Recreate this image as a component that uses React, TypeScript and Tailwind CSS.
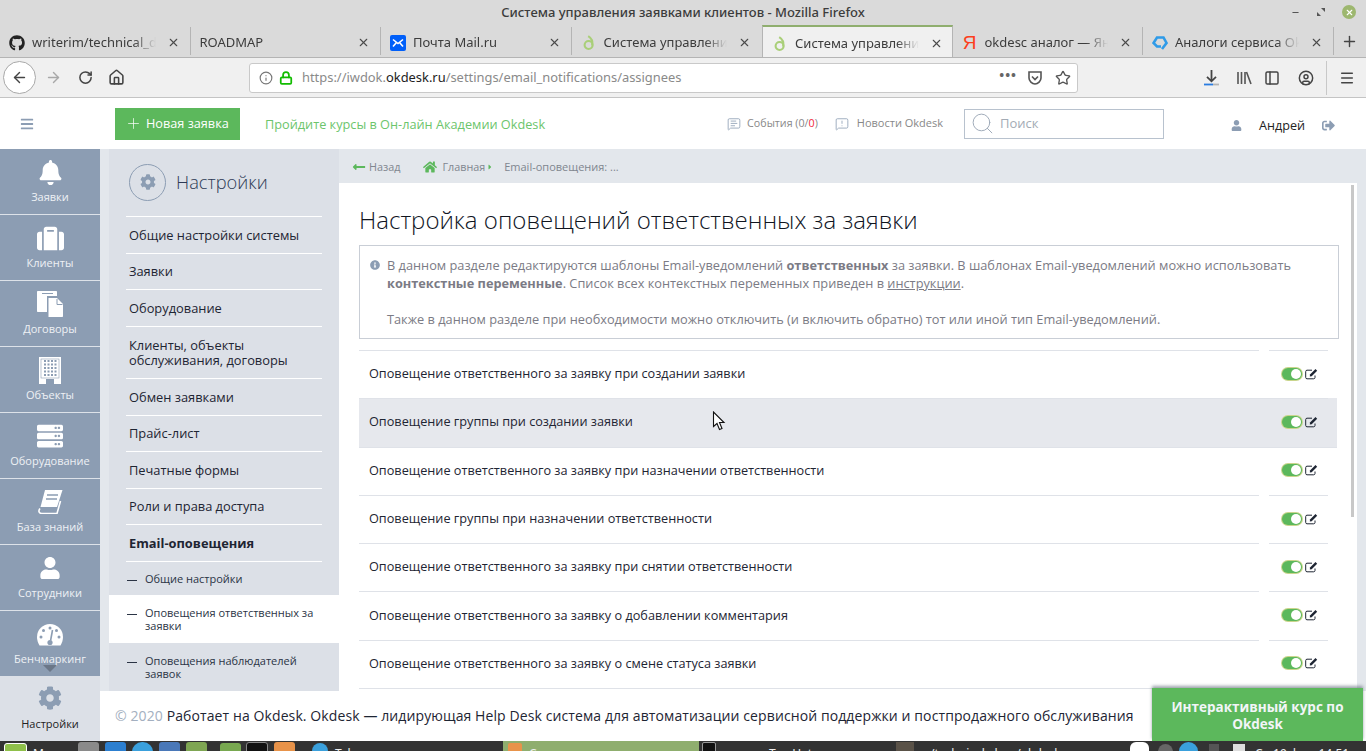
import {
  ArrowLeft,
  ArrowRight,
  RotateCw,
  Home,
  Info,
  Lock,
  Star,
  PanelLeft,
  CircleUser,
  Menu,
  X,
  Plus,
  Minus,
  MessageSquareText,
  MessageSquareWarning,
  Search,
} from "lucide-react";
import {
  FaBell,
  FaSuitcase,
  FaServer,
  FaUser,
  FaCog,
  FaHome,
  FaSignOutAlt,
  FaInfoCircle,
  FaGithub,
  FaLongArrowAltLeft,
  FaCaretRight,
  FaBars,
} from "react-icons/fa";

const chrome = "font-['Noto_Sans',sans-serif]";
const railBg = "#8c9db3";

function OkdeskLogo({ size = 16 }: { size?: number }) {
  return (
    <svg width={size} height={size} viewBox="0 0 16 20" fill="none" stroke="#a9cf78" strokeWidth="2.6">
      <circle cx="7.5" cy="12.5" r="5" />
      <path d="M12 13 C13 8 11 4 7 1.5" />
    </svg>
  );
}

function MailLogo() {
  return (
    <svg width="16" height="16" viewBox="0 0 16 16">
      <rect width="16" height="16" rx="2" fill="#005ff9" />
      <path d="M3 4.5 L8 8.5 L13 4.5 M3 11.5 L6.5 7.5 M13 11.5 L9.5 7.5" stroke="#fff" strokeWidth="1.6" fill="none" />
    </svg>
  );
}

function AnalogLogo() {
  return (
    <svg width="16" height="16" viewBox="0 0 16 16" fill="none" stroke="#2f9be8" strokeWidth="2.6">
      <path d="M10 14 L14.5 8 L11.5 2.5 H5 L1.5 8 L5 11.5 H9" />
    </svg>
  );
}

function YandexLogo() {
  return <span className="w-4 text-center text-[19px] leading-none font-['Liberation_Sans',sans-serif] text-[#fc3f1d]">Я</span>;
}

// rail icons that the packages don't have in the old solid look
function ContractsIcon() {
  return (
    <svg width="26" height="26" viewBox="0 0 26 26" fill="#fff">
      <path d="M1 0H19C19.6 0 20 .4 20 1V5H10V21H1C.4 21 0 20.6 0 20V1C0 .4 .4 0 1 0Z" />
      <path d="M11.5 7H20L26 13V25C26 25.6 25.6 26 25 26H11.5Z" />
      <path d="M5 2.5H16" stroke={railBg} strokeWidth="1" />
      <path d="M20 8V13.5H25.5" fill="none" stroke={railBg} strokeWidth="1" />
    </svg>
  );
}

function BuildingIcon() {
  const cols = [5, 8.5, 12, 15.5];
  const rows = [3, 6.5, 10, 13.5, 17];
  return (
    <svg width="22" height="27" viewBox="0 0 22 27">
      <rect width="22" height="27" fill="#fff" />
      {rows.map((y) =>
        cols.map((x) => <rect key={`${x}-${y}`} x={x} y={y} width="2" height="2" fill={railBg} />),
      )}
      <rect x="2" y="2" width="18" height="19" fill="none" stroke={railBg} strokeWidth="0.6" />
      <rect x="7" y="22" width="8" height="5" fill={railBg} />
    </svg>
  );
}

function BookIcon() {
  return (
    <svg width="25" height="24" viewBox="0 0 25 24" fill="#fff">
      <path d="M7 0H24.5L19 17H2.5Z" />
      <path d="M2 18.5C0 21 1 23.5 4 23.5H19L22.5 11" fill="none" stroke="#fff" strokeWidth="1.6" />
      <path d="M9 5H20M8 9H19" stroke={railBg} strokeWidth="1.4" />
    </svg>
  );
}

function DialIcon() {
  return (
    <svg width="26" height="22" viewBox="0 0 26 22" fill="#fff">
      <path d="M13 0A13 13 0 0 1 26 13C26 16 25 19 23.5 21.5H2.5C1 19 0 16 0 13A13 13 0 0 1 13 0Z" />
      <circle cx="13" cy="4" r="1.5" fill={railBg} />
      <circle cx="6.5" cy="6.5" r="1.5" fill={railBg} />
      <circle cx="19.5" cy="6.5" r="1.5" fill={railBg} />
      <circle cx="4" cy="13" r="1.5" fill={railBg} />
      <circle cx="22" cy="13" r="1.5" fill={railBg} />
      <path d="M15.5 6L13.6 16.5" stroke={railBg} strokeWidth="1.6" />
      <circle cx="13" cy="18.5" r="2.6" fill={railBg} />
    </svg>
  );
}

function EditIcon() {
  return (
    <svg className="ml-[3px]" width="13" height="12" viewBox="0 0 13 12" fill="none">
      <path d="M10 7.5V9.5C10 10.3 9.5 10.8 8.7 10.8H2C1.2 10.8.7 10.3.7 9.5V3.5C.7 2.7 1.2 2.2 2 2.2H7" stroke="#1e2533" strokeWidth="1" />
      <path d="M5 6.5L10.5 1L12.2 2.7L6.7 8.2L4.8 8.5Z" fill="#1e2533" />
    </svg>
  );
}

function BrowserTab({
  icon,
  title,
  active,
  last,
}: {
  icon?: React.ReactNode;
  title: string;
  active?: boolean;
  last?: boolean;
}) {
  return (
    <div
      className={`flex h-[32px] w-[190.5px] shrink-0 items-center pl-[9px] ${
        active ? "border-x border-[#b4b4b4] border-t-[2px] border-t-[#8fae6e] bg-[#f0f0f0] pr-[9px]" : ""
      }`}
    >
      <div className={`flex h-[28px] min-w-0 flex-1 items-center pt-[3px] ${icon ? "gap-[7px]" : ""}`}>
        {icon && <span className="flex w-4 shrink-0 justify-center">{icon}</span>}
        <span className="flex-1 overflow-hidden whitespace-nowrap text-[13px] text-[#3c3c3c] [mask-image:linear-gradient(to_right,black_82%,transparent)]">
          {title}
        </span>
        <X size={13} strokeWidth={2} className="ml-1 shrink-0 text-[#4a4a4a]" />
      </div>
      {!active && !last && <div className="ml-[10px] h-[28px] w-px shrink-0 bg-[#b4b4b4]" />}
      {last && <div className="ml-[10px] w-px shrink-0" />}
    </div>
  );
}

function BrowserChrome() {
  return (
    <div className={chrome}>
      <div className="relative flex h-[25px] items-center justify-center bg-[#dadada] pt-[1px] text-[13px] font-medium text-[#3c3c3c]">
        Система управления заявками клиентов - Mozilla Firefox
        <div className="absolute right-[10px] top-[5px] flex items-center gap-[17px]">
          <Minus size={9} strokeWidth={3} className="text-[#555]" />
          <svg width="8" height="8" viewBox="0 0 8 8" fill="#555">
            <path d="M4 0H8V4ZM0 4V8H4Z" />
          </svg>
          <span className="flex h-[14px] w-[14px] items-center justify-center rounded-full bg-[#9db76f]">
            <X size={9} strokeWidth={3} className="text-white" />
          </span>
        </div>
      </div>
      <div className="flex h-[32px] items-end bg-[#dadada]">
        <BrowserTab icon={<FaGithub size={16} className="text-[#222]" />} title="writerim/technical_docs" />
        <BrowserTab title="ROADMAP" />
        <BrowserTab icon={<MailLogo />} title="Почта Mail.ru" />
        <BrowserTab icon={<OkdeskLogo />} title="Система управления заявками" last />
        <BrowserTab icon={<OkdeskLogo />} title="Система управления заявками" active />
        <BrowserTab icon={<YandexLogo />} title="okdesc аналог — Яндекс" />
        <BrowserTab icon={<AnalogLogo />} title="Аналоги сервиса Okdesk" />
        <Plus size={17} strokeWidth={2} className="mb-[7px] ml-[7px] text-[#444]" />
      </div>
      <div className="flex h-[41px] items-center border-t border-[#b4b4b4] border-b border-b-[#c4c4c4] bg-[#f0f0f0] pl-[3px]">
        <span className="flex h-[33px] w-[33px] items-center justify-center rounded-full border border-[#a8a8a8] bg-white">
          <ArrowLeft size={17} strokeWidth={2} className="text-[#444]" />
        </span>
        <ArrowRight size={17} strokeWidth={2} className="ml-[9px] text-[#a8a8a8]" />
        <RotateCw size={15} strokeWidth={2.4} className="ml-[16px] text-[#444]" />
        <Home size={17} strokeWidth={2.2} className="ml-[15px] text-[#444]" />
        <div className="ml-[124px] flex h-[30px] w-[829px] items-center rounded-[3px] border border-[#c9c9c9] bg-white pl-[9px] pr-[6px] text-[12.9px] text-[#8a8a8a]">
          <Info size={14} className="text-[#777]" />
          <Lock size={14} strokeWidth={3} className="ml-[6px] text-[#12bc00]" />
          <span className="ml-[9px] flex-1 pt-[1px]">
            https://iwdok.<span className="text-[#222]">okdesk.ru</span>/settings/email_notifications/assignees
          </span>
          <span className="mb-[3px] text-[13px] font-bold tracking-[1px] text-[#666]">•••</span>
          <svg className="ml-[10px]" width="16" height="16" viewBox="0 0 16 16" fill="none" stroke="#555" strokeWidth="1.6">
            <path d="M2 2H14V8C14 11 11 14 8 14C5 14 2 11 2 8Z" />
            <path d="M5 6.5L8 9.5L11 6.5" />
          </svg>
          <Star size={16} strokeWidth={2} className="ml-[12px] text-[#555]" />
        </div>
        <svg className="ml-[126px]" width="15" height="17" viewBox="0 0 15 17" fill="none" stroke="#444" strokeWidth="1.8">
          <path d="M7.5 1V12M3 7.8L7.5 12.3L12 7.8" />
          <path d="M0 15.5H9" stroke="#2a7ce0" />
          <path d="M9 15.5H15" stroke="#b4b4b4" />
        </svg>
        <svg className="ml-[17px]" width="16" height="16" viewBox="0 0 16 16" fill="none" stroke="#555" strokeWidth="1.6">
          <path d="M2 2V14M5.5 2V14M9 2V14M10.5 2L15 14" />
        </svg>
        <PanelLeft size={16} strokeWidth={2.2} className="ml-[12px] text-[#444]" />
        <CircleUser size={16} strokeWidth={2.2} className="ml-[18px] text-[#444]" />
        <div className="ml-[12px] h-[34px] w-px bg-[#c8c8c8]" />
        <Menu size={16} strokeWidth={2.2} className="ml-[12px] text-[#444]" />
      </div>
    </div>
  );
}

function AppHeader() {
  return (
    <div className="flex h-[51px] items-center bg-white pl-[20px] text-[#888]">
      <FaBars size={14} className="text-[#8c9db3]" />
      <div className="ml-[81px] flex h-[32px] w-[125px] items-center bg-[#5cb85c] pl-[10px] text-[12.7px] text-white">
        <Plus size={17} strokeWidth={1} className="mr-[4px]" />
        Новая заявка
      </div>
      <a className="ml-[25px] pt-[2px] text-[12.73px] text-[#6cc56c]">Пройдите курсы в Он-лайн Академии Okdesk</a>
      <MessageSquareText size={14} strokeWidth={1.4} className="ml-[182px] text-[#8c9db3]" />
      <span className="ml-[6px] text-[10.7px]">
        События (0/<span className="text-[#f0263c]">0</span>)
      </span>
      <MessageSquareWarning size={14} strokeWidth={1.4} className="ml-[17px] text-[#8c9db3]" />
      <span className="ml-[8px] text-[11px]">Новости Okdesk</span>
      <div className="ml-[21px] flex h-[30px] w-[200px] items-center border border-[#b8c2ce] pl-[5px] text-[13px] text-[#a3abb5]">
        <Search size={25} strokeWidth={0.9} className="text-[#9aa6b5]" />
        <span className="ml-[5px] pt-[1px]">Поиск</span>
      </div>
      <FaUser size={11} className="ml-[67px] mt-[3px] text-[#8c9db3]" />
      <span className="ml-[17px] pt-[5px] text-[12.6px] text-[#222]">Андрей</span>
      <FaSignOutAlt size={13} className="ml-[17px] mt-[3px] text-[#8c9db3]" />
    </div>
  );
}

const railItems = [
  { label: "Заявки", icon: <FaBell size={25} /> },
  { label: "Клиенты", icon: <FaSuitcase size={27} /> },
  { label: "Договоры", icon: <ContractsIcon /> },
  { label: "Объекты", icon: <BuildingIcon /> },
  { label: "Оборудование", icon: <FaServer size={26} /> },
  { label: "База знаний", icon: <BookIcon /> },
  { label: "Сотрудники", icon: <FaUser size={22} /> },
];

function Rail() {
  return (
    <div className="flex w-[100px] shrink-0 flex-col bg-[#8c9db3] text-[11px] text-[#eef1f5]">
      {railItems.map((item) => (
        <div key={item.label} className="flex h-[66px] shrink-0 flex-col items-center border-b border-[#dde2e9] pt-[9px]">
          <span className="flex h-[28px] items-center justify-center text-white">{item.icon}</span>
          <span className="mt-[3px]">{item.label}</span>
        </div>
      ))}
      <div className="relative flex h-[65px] shrink-0 flex-col items-center pt-[10px]">
        <span className="flex h-[28px] items-center justify-center text-white">
          <DialIcon />
        </span>
        <span className="mt-[2px]">Бенчмаркинг</span>
        <span className="absolute bottom-[4px] left-[43px] h-0 w-0 border-x-[7px] border-t-[7px] border-x-transparent border-t-[#6b7788]" />
      </div>
      <div className="flex flex-1 flex-col items-center bg-[#dce0e7] pt-[10px] text-[#222]">
        <FaCog size={24} className="text-[#8c9db3]" />
        <span className="mt-[6px]">Настройки</span>
      </div>
    </div>
  );
}

const settingsLinks: { label: string; h: string; bold?: boolean }[] = [
  { label: "Общие настройки системы", h: "h-[37px]" },
  { label: "Заявки", h: "h-[36px]" },
  { label: "Оборудование", h: "h-[37px]" },
  { label: "Клиенты, объекты обслуживания, договоры", h: "h-[52px]" },
  { label: "Обмен заявками", h: "h-[37px]" },
  { label: "Прайс-лист", h: "h-[36px]" },
  { label: "Печатные формы", h: "h-[37px]" },
  { label: "Роли и права доступа", h: "h-[36px]" },
  { label: "Email-оповещения", h: "h-[37px]", bold: true },
];

function SubItem({ label, active, first }: { label: string; active?: boolean; first?: boolean }) {
  return (
    <div className={`relative flex pl-[36px] pr-[20px] text-[11px] leading-[13px] text-[#2b3445] ${active ? "bg-white" : ""}`}>
      <span className={`absolute left-[18px] h-px w-[10px] bg-[#2b3445] ${first ? "top-[18px]" : "top-[19px]"}`} />
      <span className={first ? "py-[10px]" : "py-[11px]"}>{label}</span>
    </div>
  );
}

function SettingsNav() {
  return (
    <div className="flex w-[239px] shrink-0 bg-[#dce0e7]">
      <div className="w-[9px] shrink-0 bg-[#e3e7ec]" />
      <div className="flex min-w-0 flex-1 flex-col overflow-hidden">
        <div className="ml-[17px] mr-[17px] flex h-[68px] shrink-0 items-center border-b border-white pb-[1px] pl-[3px]">
          <span className="flex h-[37px] w-[37px] items-center justify-center rounded-full border border-[#8c9db3]">
            <FaCog size={16} className="text-[#8c9db3]" />
          </span>
          <span className="ml-[10px] text-[18.3px] font-light text-[#2d3a55]">Настройки</span>
        </div>
        {settingsLinks.map((link) => (
          <div
            key={link.label}
            className={`mx-[17px] flex shrink-0 items-center border-b border-white pl-[3px] text-[12.85px] leading-[15px] text-[#1e2533] ${link.h} ${
              link.bold ? "font-bold" : ""
            }`}
          >
            {link.label}
          </div>
        ))}
        <SubItem label="Общие настройки" first />
        <SubItem label="Оповещения ответственных за заявки" active />
        <SubItem label="Оповещения наблюдателей заявок" />
        <div className="mx-[17px] border-b border-white" />
      </div>
    </div>
  );
}

const notices = [
  "Оповещение ответственного за заявку при создании заявки",
  "Оповещение группы при создании заявки",
  "Оповещение ответственного за заявку при назначении ответственности",
  "Оповещение группы при назначении ответственности",
  "Оповещение ответственного за заявку при снятии ответственности",
  "Оповещение ответственного за заявку о добавлении комментария",
  "Оповещение ответственного за заявку о смене статуса заявки",
];

function NoticeRow({ label, hover }: { label: string; hover?: boolean }) {
  return (
    <div className={`flex h-[48.3px] w-[978px] shrink-0 text-[12.7px] text-[#1e2533] ${hover ? "bg-[#e6e8ed] shadow-[0_1px_0_#dfe2e8]" : ""}`}>
      <div className="flex w-[900px] items-center border-t border-[#dfe2e8] pb-[2px] pl-[10px]">{label}</div>
      <div className={`w-[10px] border-t ${hover ? "border-[#dfe2e8]" : "border-transparent"}`} />
      <div className="flex w-[59px] items-center justify-end border-t border-[#dfe2e8] pb-[2px] pr-[10px]">
        <span className="flex h-[12px] w-[20px] items-center justify-end rounded-full bg-[#5cb85c] pr-[1px] shadow-[0_0_0_1px_#c9d58c]">
          <span className="h-[10px] w-[10px] rounded-full bg-white" />
        </span>
        <EditIcon />
      </div>
    </div>
  );
}

function MainContent() {
  return (
    <div className="relative flex min-w-0 flex-1 flex-col bg-white">
      <div className="flex h-[34px] shrink-0 items-center bg-[#e3e7ec] pl-[13px] pt-[2px] text-[10.8px] text-[#80868f]">
        <FaLongArrowAltLeft size={14} className="text-[#5cb85c]" />
        <span className="ml-[3px]">Назад</span>
        <FaHome size={14} className="ml-[23px] text-[#5cb85c]" />
        <span className="ml-[5px]">Главная</span>
        <FaCaretRight size={8} className="ml-[1px] text-[#5cb85c]" />
        <span className="ml-[10px] text-[11px]">Email-оповещения: ...</span>
      </div>
      <div className="flex min-h-0 flex-1">
        <div className="relative min-w-0 flex-1 overflow-hidden pl-[20px]">
          <h1 className="mt-[21px] text-[24px] font-light leading-[32px] text-[#10151f]">
            Настройка оповещений ответственных за заявки
          </h1>
          <div className="mt-[9px] h-[94px] w-[980px] border border-[#c9ced6] pl-[27px] pr-[20px] pt-[10px] text-[12.77px] leading-[18px] text-[#7b7b85]">
            <FaInfoCircle size={10} className="absolute left-[31px] mt-[4px] text-[#8c9db3]" />
            В данном разделе редактируются шаблоны Email-уведомлений <b>ответственных</b> за заявки. В шаблонах Email-уведомлений можно использовать{" "}
            <b>контекстные переменные</b>. Список всех контекстных переменных приведен в <u>инструкции</u>.
            <br />
            <br />
            Также в данном разделе при необходимости можно отключить (и включить обратно) тот или иной тип Email-уведомлений.
          </div>
          <div className="mt-[11px] flex flex-col">
            {notices.map((label, i) => (
              <NoticeRow key={label} label={label} hover={i === 1} />
            ))}
            <div className="h-px w-[900px] bg-[#dfe2e8]" />
          </div>
        </div>
        <div className="w-[9px] shrink-0 bg-[#e3e7ec]" />
      </div>
      <div className="absolute left-[1012px] top-[36px] h-[332px] w-[3px] bg-[#c8c8c8]" />
      <svg className="absolute left-[373px] top-[262px]" width="14" height="20" viewBox="0 0 14 20">
        <path d="M1.5 1V15.5L5 12.5L7.5 18.5L10 17.5L7.5 11.5H12Z" fill="#fff" stroke="#111" strokeWidth="1.1" />
      </svg>
    </div>
  );
}

function Footer() {
  return (
    <div className="relative flex h-[50px] shrink-0 items-center bg-white pb-[2px] pl-[15px] text-[14px] tracking-[0.1px] text-[#1e2533]">
      <span className="text-[#a3afc0]">© 2020&nbsp;</span>
      Работает на Okdesk. Okdesk — лидирующая Help Desk система для автоматизации сервисной поддержки и постпродажного обслуживания
      <div className="absolute bottom-0 right-[3px] flex h-[53px] w-[211px] items-center justify-center bg-[#5cb85c] px-[10px] pt-[2px] text-center text-[13.5px] font-bold leading-[17px] tracking-normal text-[#f2f5f8] shadow-[0_-2px_3px_rgba(90,100,115,0.6)]">
        Интерактивный курс по Okdesk
      </div>
    </div>
  );
}

function Taskbar() {
  return (
    <div className={`flex h-[10px] shrink-0 items-start overflow-hidden bg-[#333] text-[12px] leading-[14px] text-[#eee] ${chrome}`}>
      <span className="ml-[4px] mt-[2px] h-[20px] w-[23px] shrink-0 rounded-[3px] border border-white bg-[#8fc04a]" />
      <span className="ml-[6px] mt-[6px] w-[45px] shrink-0">Меню</span>
      <span className="mt-[1px] h-[20px] w-[21px] shrink-0 rounded-[3px] bg-[#8a8a8a]" />
      <span className="ml-[6px] mt-[1px] h-[20px] w-[21px] shrink-0 rounded-[3px] bg-[#2c7fd0]" />
      <span className="ml-[6px] mt-[1px] h-[20px] w-[21px] shrink-0 rounded-full bg-[#3aa0dc]" />
      <span className="ml-[6px] mt-[1px] h-[20px] w-[21px] shrink-0 rounded-[3px] bg-[#4a78b8]" />
      <span className="ml-[6px] mt-[1px] h-[20px] w-[21px] shrink-0 rounded-[3px] bg-[#7fa653]" />
      <span className="ml-[13px] mt-[2px] h-[20px] w-[21px] shrink-0 rounded-[3px] bg-[#78a850]" />
      <span className="ml-[5px] mt-[1px] h-[20px] w-[22px] shrink-0 rounded-[3px] border border-[#888] bg-[#111]" />
      <span className="ml-[6px] mt-[1px] h-[20px] w-[21px] shrink-0 rounded-[3px] bg-[#e8934a]" />
      <span className="ml-[17px] mt-[2px] h-[16px] w-[16px] shrink-0 rounded-full bg-[#3aa0dc]" />
      <span className="ml-[7px] mt-[6px] w-[168px] shrink-0">Telegram</span>
      <div className="flex h-[24px] w-[196px] shrink-0 items-start bg-[#8fae6e] pl-[5px]">
        <span className="mt-[2px] h-[18px] w-[14px] rounded-[2px] bg-[#e8934a]" />
        <span className="ml-[7px] mt-[6px] whitespace-nowrap">Система управления</span>
      </div>
      <span className="ml-[3px] mt-[1px] h-[20px] w-[14px] shrink-0 rounded-[2px] border border-[#999] bg-[#111]" />
      <span className="ml-[53px] mt-[6px] w-[127px] shrink-0 whitespace-nowrap">Ten Hat</span>
      <span className="mt-[1px] h-[20px] w-[18px] shrink-0 bg-[#5a5248]" />
      <span className="ml-[16px] mt-[6px] w-[200px] shrink-0 whitespace-nowrap">/technical_docs/okdesk</span>
      <span className="mt-[1px] h-[20px] w-[19px] shrink-0 rounded-t-[6px] bg-white" />
      <span className="ml-[9px] mt-[3px] h-[15px] w-[15px] shrink-0 rounded-full bg-[#666]" />
      <span className="ml-[6px] mt-[1px] h-[19px] w-[19px] shrink-0 rounded-full bg-[#3aa0dc]" />
      <span className="ml-[11px] mt-[3px] h-[16px] w-[10px] shrink-0 bg-[#555]" />
      <span className="ml-[14px] mt-[3px] h-[16px] w-[12px] shrink-0 bg-[#ddd]" />
      <span className="ml-[10px] mt-[6px] whitespace-nowrap">Ср 19 фев, 14:51</span>
    </div>
  );
}

export default function App() {
  return (
    <div className="flex h-[751px] w-[1366px] flex-col overflow-hidden bg-white font-['Open_Sans',sans-serif]">
      <BrowserChrome />
      <AppHeader />
      <div className="flex min-h-0 flex-1">
        <Rail />
        <div className="flex min-w-0 flex-1 flex-col">
          <div className="flex min-h-0 flex-1">
            <SettingsNav />
            <MainContent />
          </div>
          <Footer />
        </div>
      </div>
      <Taskbar />
    </div>
  );
}
